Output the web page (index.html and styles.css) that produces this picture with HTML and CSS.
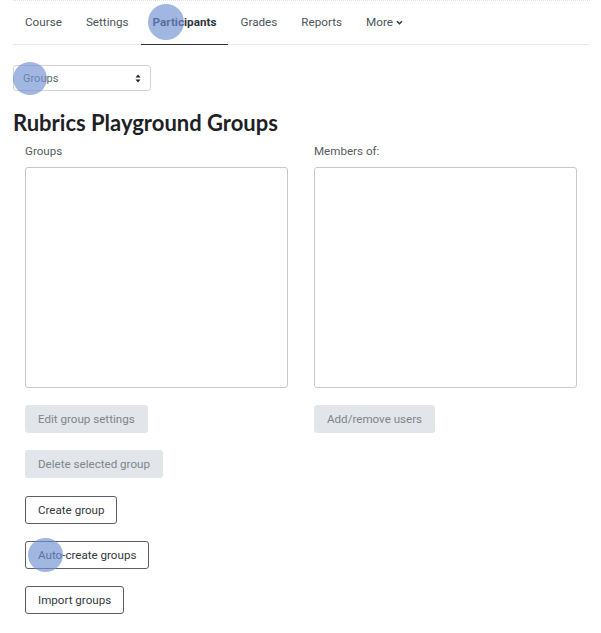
FILE: index.html
```html
<!DOCTYPE html>
<html>
<head>
<meta charset="utf-8">
<link rel="stylesheet" href="styles.css">
</head>
<body>
<div class="page">
  <nav class="tabs">
    <a class="tab">Course</a>
    <a class="tab">Settings</a>
    <a class="tab active">Participants<span class="mark mark-tab"></span></a>
    <a class="tab">Grades</a>
    <a class="tab">Reports</a>
    <a class="tab">More <svg class="caret" width="7" height="5" viewBox="0 0 8 6"><path d="M1 1.5 L4 4.5 L7 1.5" fill="none" stroke="#333" stroke-width="1.8"/></svg></a>
  </nav>
  <div class="selectwrap">
    <div class="select">
      <span>Groups</span>
      <svg width="6" height="9" viewBox="0 0 6 9"><path d="M0.5 3.5 L3 0.5 L5.5 3.5 Z M0.5 5.5 L3 8.5 L5.5 5.5 Z" fill="#222"/></svg>
    </div>
    <span class="mark mark-select"></span>
  </div>
  <h2 class="title">Rubrics Playground Groups</h2>
  <div class="cols">
    <div class="col">
      <div class="label">Groups</div>
      <div class="listbox"></div>
      <div class="btns">
        <button class="btn disabled">Edit group settings</button>
        <button class="btn disabled">Delete selected group</button>
        <button class="btn outline">Create group</button>
        <button class="btn outline">Auto-create groups<span class="mark mark-auto"></span></button>
        <button class="btn outline">Import groups</button>
      </div>
    </div>
    <div class="col">
      <div class="label">Members of:</div>
      <div class="listbox"></div>
      <div class="btns">
        <button class="btn disabled">Add/remove users</button>
      </div>
    </div>
  </div>
</div>
</body>
</html>
```
FILE: styles.css
```css
* { box-sizing: border-box; }
body {
  margin: 0;
  background: #fff;
  font-family: Roboto, "Liberation Sans", sans-serif;
  color: #333;
}
.page {
  width: 577px;
  margin-left: 13px;
  border-top: 1px dotted #dfe3e7;
}
.tabs {
  display: flex;
  height: 44px;
  border-bottom: 1px solid #e6eaed;
  align-items: stretch;
}
.tab {
  position: relative;
  display: flex;
  align-items: center;
  padding: 0 12px 2px;
  font-size: 11.7px;
  color: #4b535b;
  gap: 3px;
}
.tab.active {
  font-weight: 700;
  color: #2e3338;
  border-bottom: 1.5px solid #333;
  margin-bottom: -1px;
}
.caret { margin-top: 1px; }
.mark {
  position: absolute;
  border-radius: 50%;
  background: rgba(110, 145, 210, 0.65);
  pointer-events: none;
}
.mark-tab { left: 7px; top: 3px; width: 36px; height: 36px; }
.selectwrap {
  position: relative;
  margin-top: 20px;
  width: 138px;
}
.select {
  height: 26px;
  border: 1px solid #ced4da;
  border-radius: 3px;
  display: flex;
  align-items: center;
  justify-content: space-between;
  padding: 0 9px 0 9px;
  font-size: 11px;
  color: #5f676e;
}
.mark-select { left: 0; top: -3px; width: 34px; height: 33px; }
.title {
  margin: 18px 0 0 0;
  font-family: Lato, "Open Sans", sans-serif;
  font-weight: 700;
  font-size: 22px;
  color: #1d2125;
  line-height: 28px;
}
.cols {
  display: flex;
  gap: 26px;
  padding-left: 12px;
}
.col { width: 263px; }
.label {
  font-size: 11.6px;
  color: #555b61;
  line-height: 16px;
  margin-top: 6px;
}
.listbox {
  margin-top: 8px;
  height: 221px;
  border: 1px solid #c4c9ce;
  border-radius: 3px;
}
.btns {
  display: flex;
  flex-direction: column;
  align-items: flex-start;
  gap: 17.3px;
  margin-top: 17px;
}
.btn {
  position: relative;
  height: 28px;
  padding: 0 12px;
  font-family: Roboto, "Liberation Sans", sans-serif;
  font-size: 11.6px;
  border-radius: 3px;
  line-height: 26px;
}
.btn.disabled {
  background: #e2e5e9;
  border: 1px solid #e2e5e9;
  color: #7f868d;
}
.btn.outline {
  background: #fff;
  border: 1px solid #5a5f64;
  color: #33383d;
}
.mark-auto { left: 2px; top: -4px; width: 35px; height: 34px; }
```
